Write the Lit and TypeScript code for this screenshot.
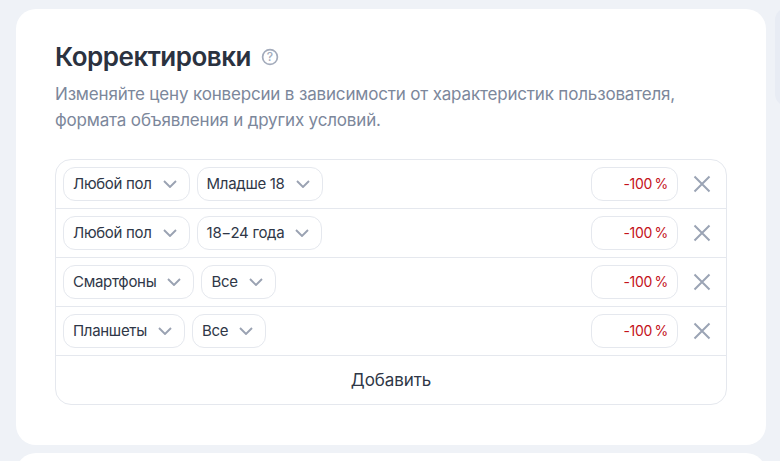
import { LitElement, html, css } from "lit";
import { customElement } from "lit/decorators.js";

const rows = [
  ["Любой пол", "Младше 18"],
  ["Любой пол", "18−24 года"],
  ["Смартфоны", "Все"],
  ["Планшеты", "Все"],
];

@customElement("app-root")
export class AppRoot extends LitElement {
  static styles = css`
    :host { display: block; width: 780px; height: 461px; overflow: hidden; background: #eff2f7; font-family: Inter, "Noto Sans", sans-serif; color: #2f3747; }
    .page { display: flex; flex-direction: column; gap: 8px; padding: 9px 0 0 16px; position: relative; height: 452px; box-sizing: border-box; }
    .card { width: 750px; height: 436px; box-sizing: border-box; flex: none; background: #fff; border-radius: 20px; padding: 32px 39px 0; }
    .next { height: 40px; }
    .side { position: absolute; left: 775px; top: 8px; width: 30px; height: 98px; border-radius: 12px; background: #e8ecf4; }
    .head { display: flex; align-items: center; gap: 10px; height: 32px; }
    h1 { margin: 0; font-size: 26px; line-height: 32px; font-weight: 600; letter-spacing: -0.5px; color: #2b3240; }
    .help { display: block; }
    p { margin: 8px 0 0; font-size: 17px; line-height: 26px; color: #7c879b; letter-spacing: -0.17px; width: 660px; }
    .box { margin-top: 26px; border: 1px solid #e5e8ee; border-radius: 16px; width: 672px; box-sizing: border-box; }
    .row { display: flex; align-items: center; height: 49px; box-sizing: border-box; border-bottom: 1px solid #e5e8ee; padding: 0 15px 0 7px; }
    .chip { display: flex; align-items: center; justify-content: space-between; gap: 11px; height: 34px; box-sizing: border-box; padding: 0 12px 1px 9px; border: 1px solid #e5e8ee; border-radius: 12px; margin-right: 7px; font-size: 15px; letter-spacing: -0.3px; white-space: nowrap; }
    .chip svg { margin-top: 1px; }
    .pct { margin-left: auto; width: 87px; height: 34px; box-sizing: border-box; border: 1px solid #e5e8ee; border-radius: 12px; display: flex; align-items: center; justify-content: flex-end; padding: 0 9px 1px 0; font-size: 14px; letter-spacing: -0.25px; color: #c4121a; }
    .x { margin-left: 15px; display: block; }
    .add { display: flex; align-items: center; justify-content: center; height: 48px; font-size: 17px; letter-spacing: -0.1px; color: #2f3747; }
  `;

  render() {
    return html`<div class="page">
      <div class="card">
        <div class="head">
          <h1>Корректировки</h1>
          <svg class="help" width="18" height="18" viewBox="0 0 18 18" fill="none">
            <circle cx="9" cy="9" r="7.4" stroke="#a3abbb" stroke-width="1.7"/>
            <text x="9" y="13.3" text-anchor="middle" font-size="12" font-weight="500" fill="#a3abbb" font-family="Inter, sans-serif">?</text>
          </svg>
        </div>
        <p>Изменяйте цену конверсии в зависимости от характеристик пользователя, формата объявления и других условий.</p>
        <div class="box">
          ${rows.map(
            (r) => html`<div class="row">
              ${r.map(
                (t) => html`<div class="chip">
                  <span>${t}</span>
                  <svg width="14" height="8" viewBox="0 0 14 8" fill="none"><path d="M1 1l6 6 6-6" stroke="#9aa2b2" stroke-width="1.9"/></svg>
                </div>`
              )}
              <div class="pct">-100&#8201;%</div>
              <svg class="x" width="18" height="18" viewBox="0 0 18 18" fill="none"><path d="M1.5 1.5l15 15M16.5 1.5l-15 15" stroke="#9ba4b5" stroke-width="2"/></svg>
            </div>`
          )}
          <div class="add">Добавить</div>
        </div>
      </div>
      <div class="card next"></div>
      <div class="side"></div>
    </div>`;
  }
}
